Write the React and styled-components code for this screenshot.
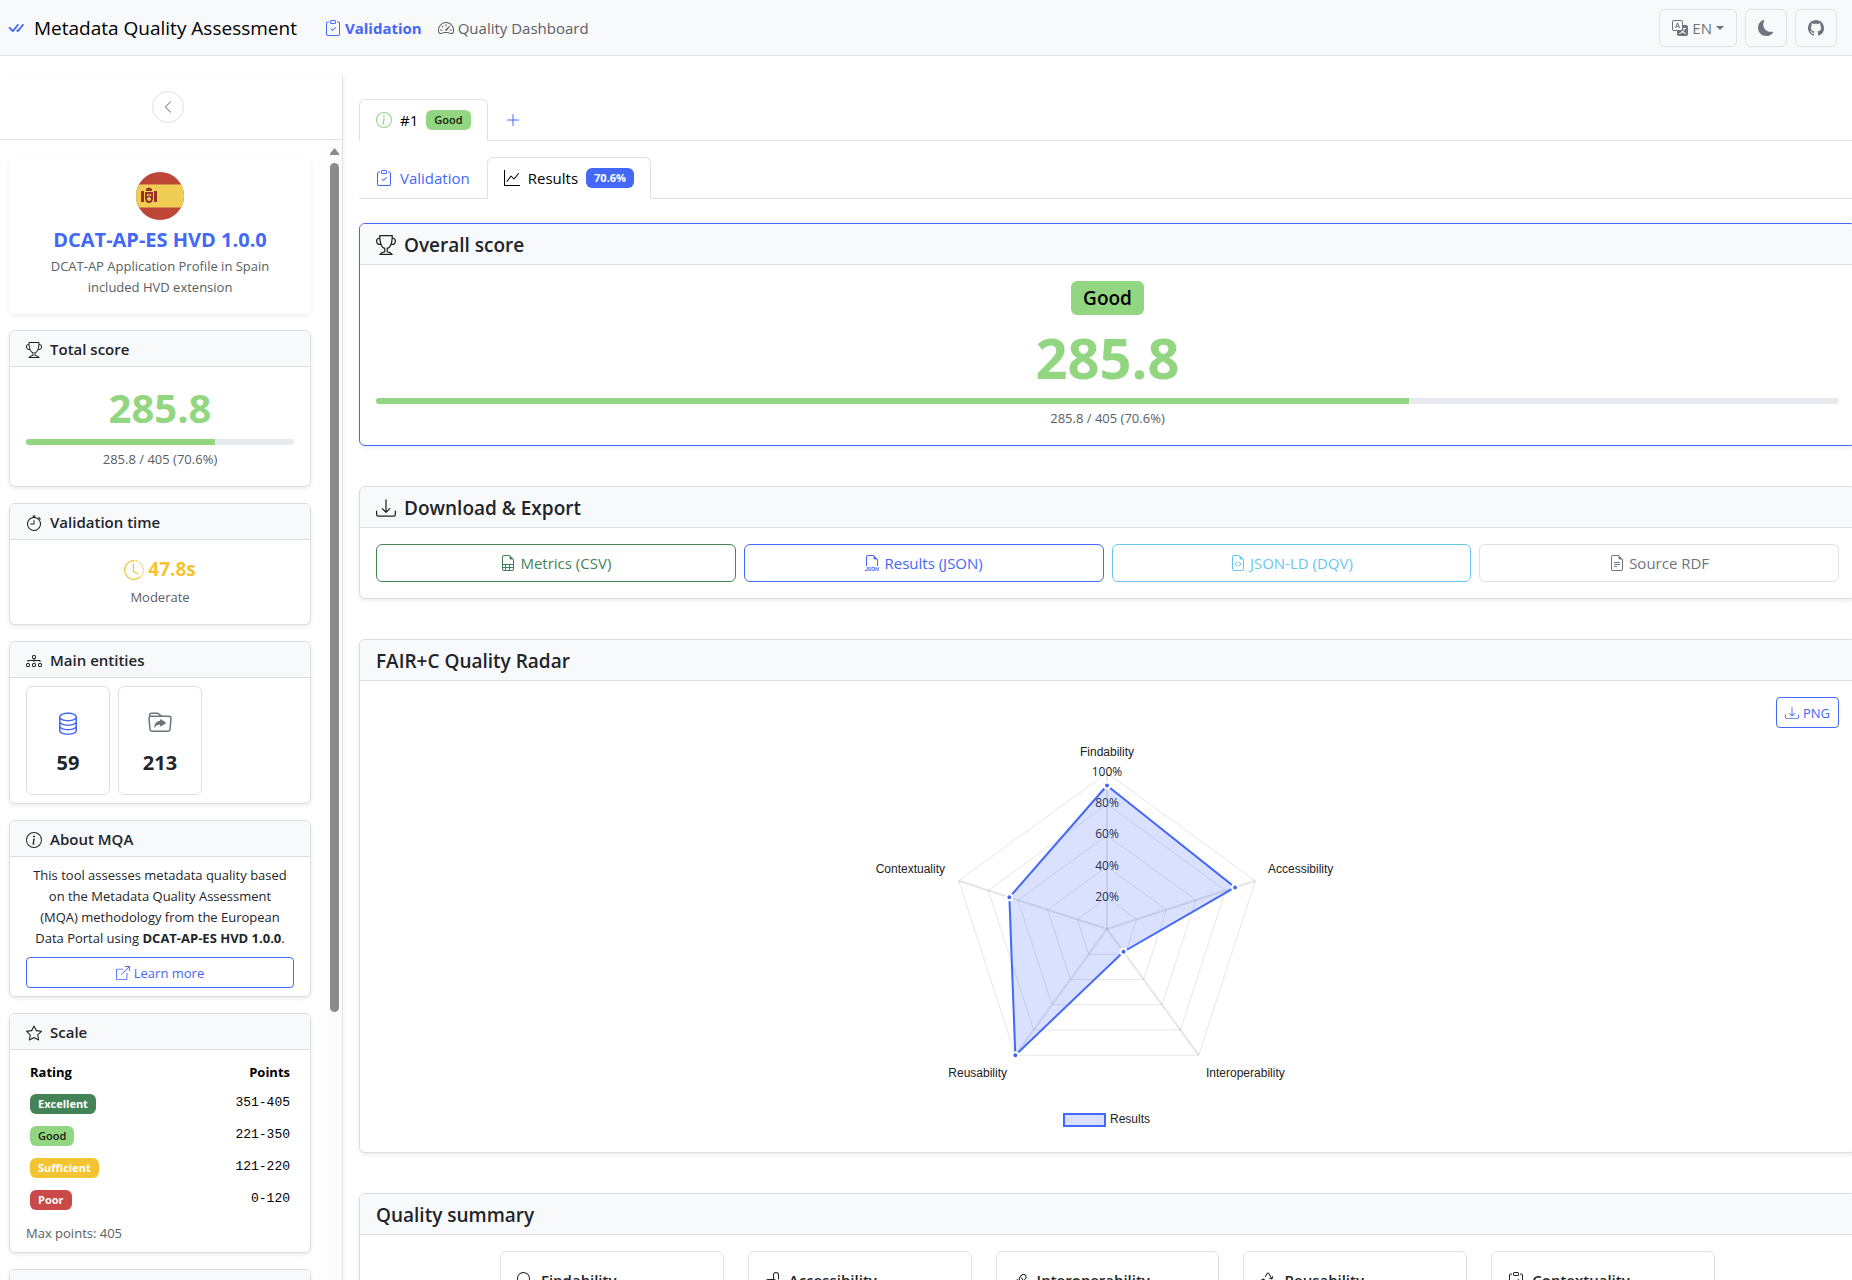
import React from "react";
import styled, { createGlobalStyle, css } from "styled-components";
import {
  BsBoxArrowUpRight, BsCheckAll, BsChevronLeft, BsClipboardCheck, BsClockHistory,
  BsDatabase, BsDiagram3, BsDownload, BsFileEarmarkCode, BsFileEarmarkSpreadsheet,
  BsFileEarmarkText, BsFiletypeJson, BsFolderSymlink, BsGithub, BsGraphUp,
  BsInfoCircle, BsLink45Deg, BsMoonFill, BsPlusLg, BsRecycle, BsSearch,
  BsSpeedometer2, BsStar, BsStopwatch, BsTranslate, BsTrophy, BsUnlock,
} from "react-icons/bs";

const c = {
  primary: "#4368f8",
  text: "#212529",
  muted: "#6c757d",
  border: "#dee2e6",
  cardBorder: "#dcdddf",
  head: "#f8f9fb",
  good: "#93d681",
  excellent: "#438355",
  sufficient: "#f3c431",
  poor: "#c94a49",
  info: "#69c6f0",
};

const GlobalStyle = createGlobalStyle`
  *, *::before, *::after { box-sizing: border-box; }
  body {
    margin: 0;
    background: #fff;
    color: ${c.text};
    font: 400 16px/24px "Open Sans", "Noto Sans", sans-serif;
  }
  h1, h2, h3, h4, p { margin: 0; }
  button { font: inherit; cursor: pointer; }
  a { text-decoration: none; }
  svg { flex: none; }
`;

const Shell = styled.div`
  height: 100vh;
  display: flex;
  flex-direction: column;
  overflow: hidden;
`;

/* Top bar */
const Navbar = styled.header`
  flex: none;
  display: flex;
  align-items: center;
  min-height: 56px;
  padding: 0 15px 0 6px;
  background: ${c.head};
  border-bottom: 1px solid ${c.border};
`;
const Brand = styled.a`
  display: flex;
  align-items: center;
  gap: 8px;
  color: #000;
  font-size: 19px;
  font-weight: 500;
  svg { color: ${c.primary}; width: 20px; height: 20px; }
`;
const NavLinks = styled.nav`
  display: flex;
  gap: 16px;
  margin-left: 28px;
`;
const NavLink = styled.a`
  display: flex;
  align-items: center;
  gap: 4px;
  font-size: 15px;
  color: ${(p) => (p.$active ? c.primary : "#5b5f64")};
  font-weight: ${(p) => (p.$active ? 700 : 400)};
`;
const NavActions = styled.div`
  display: flex;
  gap: 8px;
  margin-left: auto;
`;
const NavButton = styled.button`
  display: flex;
  align-items: center;
  justify-content: center;
  gap: 4px;
  height: 38px;
  padding: 0 12px;
  font-size: 15px;
  color: ${c.muted};
  background: transparent;
  border: 1px solid ${c.border};
  border-radius: 6px;
`;
const Caret = styled.span`
  border: 4px solid transparent;
  border-top-color: currentColor;
  border-bottom: 0;
`;

/* Sidebar */
const Columns = styled.div`
  flex: 1;
  min-height: 0;
  display: flex;
`;
const Sidebar = styled.aside`
  flex: none;
  width: 343px;
  margin-top: 19px;
  display: flex;
  flex-direction: column;
  border-right: 1px solid ${c.border};
  box-shadow: 2px 0 4px rgba(0, 0, 0, 0.03);
`;
const SidebarTop = styled.div`
  flex: none;
  display: flex;
  align-items: center;
  justify-content: center;
  height: 65px;
  padding-right: 6px;
  border-bottom: 1px solid ${c.border};
`;
const CollapseButton = styled.button`
  display: flex;
  align-items: center;
  justify-content: center;
  width: 32px;
  height: 32px;
  padding: 0;
  color: ${c.muted};
  background: #fff;
  border: 1px solid ${c.border};
  border-radius: 50%;
`;
const SidebarScroll = styled.div`
  flex: 1;
  min-height: 0;
  display: flex;
  overflow: hidden;
`;
const CardStack = styled.div`
  flex: 1;
  display: flex;
  flex-direction: column;
  gap: 16px;
  padding: 16px 16px 16px 9px;
`;
const ScrollTrack = styled.div`
  flex: none;
  width: 15px;
  display: flex;
  flex-direction: column;
  align-items: center;
  padding-top: 8px;
  background: #fcfcfc;
`;
const ScrollThumb = styled.div`
  flex: 0 0 75%;
  width: 9px;
  margin-top: 8px;
  background: #8b8b8b;
  border-radius: 5px;
`;

/* Cards */
const Card = styled.section`
  flex: none;
  background: #fff;
  border: 1px solid ${(p) => (p.$accent ? c.primary : c.cardBorder)};
  border-radius: 6px;
  box-shadow: 0 2px 4px rgba(0, 0, 0, 0.075);
`;
const CardHead = styled.div`
  display: flex;
  align-items: center;
  gap: 8px;
  padding: 9px 16px 7px;
  background: ${c.head};
  border-bottom: 1px solid ${c.cardBorder};
  border-radius: 5px 5px 0 0;
  h2 { font-size: 19px; line-height: 24px; font-weight: 600; }
  h3 { font-size: 15px; line-height: 19px; font-weight: 600; }
`;
const CardBody = styled.div`
  display: flex;
  flex-direction: column;
  align-items: ${(p) => (p.$stretch ? "stretch" : "center")};
  padding: ${(p) => (p.$tight ? "8px" : "16px")} 16px;
`;
const ProfileCard = styled.section`
  flex: none;
  display: flex;
  flex-direction: column;
  align-items: center;
  padding: 16px;
  text-align: center;
  border-radius: 6px;
  box-shadow: 0 2px 4px rgba(0, 0, 0, 0.075);
  svg { margin-bottom: 8px; }
  h1 {
    margin-bottom: 4px;
    font-size: 20px;
    line-height: 24px;
    font-weight: 700;
    color: ${c.primary};
  }
`;
const Small = styled.p`
  font-size: 13px;
  line-height: 21px;
  color: #595e63;
  text-align: ${(p) => p.$align || "center"};
`;
const AboutText = styled(Small)`
  padding: 0 4px;
  color: ${c.text};
`;
const Score = styled.div`
  margin-bottom: 6px;
  font-size: ${(p) => (p.$large ? 56 : 40)}px;
  line-height: ${(p) => (p.$large ? 69 : 50)}px;
  font-weight: 700;
  color: ${c.good};
`;
const Progress = styled.div`
  align-self: stretch;
  height: 6px;
  margin-bottom: 4px;
  overflow: hidden;
  background: #e9eaef;
  border-radius: 6px;
`;
const ProgressFill = styled.div`
  height: 100%;
  background: ${c.good};
`;
const TimeValue = styled.div`
  display: flex;
  align-items: center;
  gap: 4px;
  margin-bottom: 4px;
  font-size: 19px;
  line-height: 27px;
  font-weight: 700;
  color: ${c.sufficient};
`;
const EntityGrid = styled.div`
  display: grid;
  grid-template-columns: repeat(3, 1fr);
  gap: 8px;
`;
const Entity = styled.div`
  display: flex;
  flex-direction: column;
  align-items: center;
  gap: 16px;
  padding: 24px 0 19px;
  border: 1px solid ${c.border};
  border-radius: 6px;
  font-size: 20px;
  font-weight: 700;
  svg { color: ${(p) => p.$color}; }
`;
const ScaleTable = styled.table`
  width: 100%;
  margin-bottom: 8px;
  border-collapse: collapse;
  font-size: 13px;
  line-height: 21px;
  color: #000;
  th, td { padding: 4px; text-align: left; }
  th:last-child, td:last-child { text-align: right; }
  tbody tr { height: 32px; }
  td:last-child { padding-bottom: 6px; font-family: "Liberation Mono", monospace; }
`;
const Badge = styled.span`
  display: inline-block;
  vertical-align: middle;
  padding: 4px 8px;
  font-size: 11px;
  line-height: 12px;
  font-weight: ${(p) => (p.$dark ? 600 : 700)};
  color: ${(p) => (p.$dark ? "#152010" : "#fff")};
  background: ${(p) => p.$bg};
  border-radius: 6px;
  ${(p) => p.$large && css`
    margin-bottom: 8px;
    padding: 7px 12px;
    font-size: 19px;
    line-height: 20px;
    color: #000;
  `}
`;

/* Main area */
const Main = styled.main`
  flex: 1;
  min-width: 0;
  margin-right: -4px;
  padding: 43px 0 0 16px;
`;
const Tabs = styled.div`
  display: flex;
  margin-bottom: ${(p) => p.$space}px;
  border-bottom: 1px solid ${c.border};
`;
const Tab = styled.button`
  display: flex;
  align-items: center;
  gap: 8px;
  height: 42px;
  margin-bottom: -1px;
  padding: 0 16px;
  font-size: 15px;
  color: ${(p) => (p.$active ? "#000" : c.primary)};
  background: ${(p) => (p.$active ? "#fff" : "transparent")};
  border: 1px solid ${(p) => (p.$active ? c.border : "transparent")};
  border-bottom-color: ${(p) => (p.$active ? "#fff" : "transparent")};
  border-radius: 6px 6px 0 0;
`;
const Sections = styled.div`
  display: flex;
  flex-direction: column;
  gap: 40px;
`;
const ButtonRow = styled.div`
  display: grid;
  grid-template-columns: repeat(4, 1fr);
  gap: 8px;
`;
const Button = styled.button`
  display: flex;
  align-items: center;
  justify-content: center;
  align-self: ${(p) => p.$self || "auto"};
  gap: 4px;
  height: ${(p) => (p.$small ? 31 : 38)}px;
  margin: ${(p) => (p.$small ? "0 0 8px" : "0")};
  padding: 0 8px;
  font-size: ${(p) => (p.$small ? 13 : 15)}px;
  color: ${(p) => p.$color || c.primary};
  background: #fff;
  border: 1px solid ${(p) => p.$border || p.$color || c.primary};
  border-radius: ${(p) => (p.$small ? 4 : 6)}px;
`;
const LearnMore = styled(Button).attrs({ as: "a", href: "#about" })`
  margin: 8px 0 0;
`;
const SummaryGrid = styled.div`
  display: flex;
  justify-content: center;
  gap: 24px;
`;
const SummaryCard = styled.article`
  flex: 0 0 calc((100% + 24px) / 6 - 24px);
  height: 160px;
  display: flex;
  align-items: flex-start;
  gap: 8px;
  padding: 16px;
  border: 1px solid ${c.border};
  border-radius: 6px;
  svg { margin-top: 4px; }
  h4 { font-size: 15px; line-height: 24px; font-weight: 600; }
`;

const SpainFlag = () => (
  <svg width="48" height="48" viewBox="0 0 48 48" role="img" aria-label="Spain">
    <clipPath id="disc"><circle cx="24" cy="24" r="24" /></clipPath>
    <g clipPath="url(#disc)">
      <rect width="48" height="48" fill="#bd4636" />
      <rect y="12" width="48" height="24" fill="#d98a4c" />
      <rect y="13" width="48" height="22" fill="#f0cd55" />
    </g>
    <g fill="#9b2f22">
      <path d="M5 19h3v11H5zM18 19h3v11h-3z" />
      <path d="M10 17q3-3 6 0v2h-6z" />
      <path d="M9 20h8v6q0 5-4 5t-4-5z" />
    </g>
    <path d="M11 22h1.600v2H11zM13.600 22h1.600v2h-1.600zM11 26h4q0 3-2 3t-2-3z" fill="#f0cd55" />
    <circle cx="13" cy="25.500" r="1" fill="#d9b8b0" />
  </svg>
);

const CX = 299;
const CY = 193;
const R = 156;
const point = (i, k) => {
  const a = (Math.PI * 2 * i) / 5 - Math.PI / 2;
  return [CX + Math.cos(a) * R * k, CY + Math.sin(a) * R * k];
};
const polygon = (ks) => ks.map((k, i) => point(i, k).join(",")).join(" ");
const values = [0.92, 0.863, 0.18, 1, 0.658];

const ChartSvg = styled.svg`
  max-width: 100%;
  font-family: "Liberation Sans", Arial, sans-serif;
  font-size: 12px;
  fill: #222;
`;
const TickLabel = styled.text`
  font-family: "Open Sans", sans-serif;
`;

const Radar = () => (
  <ChartSvg width="600" height="400" viewBox="0 0 600 400" role="img" aria-label="FAIR+C quality radar">
    {[0.2, 0.4, 0.6, 0.8, 1].map((k) => (
      <polygon key={k} points={polygon([k, k, k, k, k])} fill="none" stroke="#000" strokeOpacity="0.1" />
    ))}
    {values.map((_, i) => {
      const [x, y] = point(i, 1);
      return <line key={i} x1={CX} y1={CY} x2={x} y2={y} stroke="#000" strokeOpacity="0.1" strokeWidth="2" />;
    })}
    <g textAnchor="middle">
      <text x={CX} y="20">Findability</text>
      {[100, 80, 60, 40, 20].map((t) => (
        <TickLabel key={t} x={CX} y={Math.round(CY - (R * t) / 100) + 3}>{t}%</TickLabel>
      ))}
    </g>
    <polygon points={polygon(values)} fill={c.primary} fillOpacity="0.2" stroke={c.primary} strokeWidth="2" />
    {values.map((k, i) => {
      const [x, y] = point(i, k);
      return <circle key={i} cx={x} cy={y} r="3" fill={c.primary} stroke="#fff" strokeWidth="2" />;
    })}
    <text x="460" y="137">Accessibility</text>
    <text x="398" y="341">Interoperability</text>
    <text x="199" y="341" textAnchor="end">Reusability</text>
    <text x="137" y="137" textAnchor="end">Contextuality</text>
    <rect x="256" y="378" width="41" height="12" fill={c.primary} fillOpacity="0.2" stroke={c.primary} strokeWidth="2" />
    <text x="302" y="387">Results</text>
  </ChartSvg>
);

const PERCENT = 70.6;
const Bar = () => (
  <Progress role="progressbar" aria-label="Score" aria-valuenow={PERCENT} aria-valuemin={0} aria-valuemax={100}>
    <ProgressFill style={{ width: `${PERCENT}%` }} />
  </Progress>
);

const SideCard = ({ icon: Icon, title, children, ...body }) => (
  <Card>
    <CardHead><Icon size={16} /><h3>{title}</h3></CardHead>
    <CardBody {...body}>{children}</CardBody>
  </Card>
);

const Panel = ({ icon: Icon, title, accent, children, ...body }) => (
  <Card $accent={accent}>
    <CardHead>{Icon && <Icon size={20} />}<h2>{title}</h2></CardHead>
    <CardBody {...body}>{children}</CardBody>
  </Card>
);

const scale = [
  ["Excellent", "351-405", c.excellent],
  ["Good", "221-350", c.good],
  ["Sufficient", "121-220", c.sufficient],
  ["Poor", "0-120", c.poor],
];

const dimensions = [
  ["Findability", BsSearch],
  ["Accessibility", BsUnlock],
  ["Interoperability", BsLink45Deg],
  ["Reusability", BsRecycle],
  ["Contextuality", BsClipboardCheck],
];

export default function App() {
  return (
    <Shell>
      <GlobalStyle />
      <Navbar>
        <Brand href="#"><BsCheckAll />Metadata Quality Assessment</Brand>
        <NavLinks>
          <NavLink href="#validation" $active><BsClipboardCheck size={16} />Validation</NavLink>
          <NavLink href="#dashboard"><BsSpeedometer2 size={16} />Quality Dashboard</NavLink>
        </NavLinks>
        <NavActions>
          <NavButton aria-haspopup="menu"><BsTranslate size={16} />EN<Caret /></NavButton>
          <NavButton aria-label="Dark mode"><BsMoonFill size={16} /></NavButton>
          <NavButton aria-label="GitHub"><BsGithub size={16} /></NavButton>
        </NavActions>
      </Navbar>

      <Columns>
        <Sidebar>
          <SidebarTop>
            <CollapseButton aria-label="Collapse sidebar"><BsChevronLeft size={14} /></CollapseButton>
          </SidebarTop>
          <SidebarScroll>
            <CardStack>
              <ProfileCard>
                <SpainFlag />
                <h1>DCAT-AP-ES HVD 1.0.0</h1>
                <Small>DCAT-AP Application Profile in Spain included HVD extension</Small>
              </ProfileCard>
              <SideCard icon={BsTrophy} title="Total score">
                <Score>285.8</Score>
                <Bar />
                <Small>285.8 / 405 (70.6%)</Small>
              </SideCard>
              <SideCard icon={BsStopwatch} title="Validation time">
                <TimeValue><BsClockHistory size={20} />47.8s</TimeValue>
                <Small>Moderate</Small>
              </SideCard>
              <SideCard icon={BsDiagram3} title="Main entities" $tight $stretch>
                <EntityGrid>
                  <Entity $color={c.primary}><BsDatabase size={24} />59</Entity>
                  <Entity $color={c.muted}><BsFolderSymlink size={24} />213</Entity>
                </EntityGrid>
              </SideCard>
              <SideCard icon={BsInfoCircle} title="About MQA" $tight $stretch>
                <AboutText>
                  This tool assesses metadata quality based on the Metadata Quality Assessment (MQA)
                  methodology from the European Data Portal using <strong>DCAT-AP-ES HVD 1.0.0</strong>.
                </AboutText>
                <LearnMore $small><BsBoxArrowUpRight size={14} />Learn more</LearnMore>
              </SideCard>
              <SideCard icon={BsStar} title="Scale" $tight $stretch>
                <ScaleTable>
                  <thead><tr><th>Rating</th><th>Points</th></tr></thead>
                  <tbody>
                    {scale.map(([name, points, bg]) => (
                      <tr key={name}>
                        <td><Badge $bg={bg} $dark={name === "Good"}>{name}</Badge></td>
                        <td>{points}</td>
                      </tr>
                    ))}
                  </tbody>
                </ScaleTable>
                <Small $align="left">Max points: 405</Small>
              </SideCard>
              <Card><CardHead><h3>&nbsp;</h3></CardHead></Card>
            </CardStack>
            <ScrollTrack aria-hidden="true">
              <svg width="9" height="7" viewBox="0 0 9 7"><path d="M4.500 0 9 5.500V7H0V5.500z" fill="#8b8b8b" /></svg>
              <ScrollThumb />
            </ScrollTrack>
          </SidebarScroll>
        </Sidebar>

        <Main>
          <Tabs role="tablist" $space={16}>
            <Tab role="tab" aria-selected="true" $active>
              <BsInfoCircle size={16} color={c.good} />#1<Badge $bg={c.good} $dark>Good</Badge>
            </Tab>
            <Tab aria-label="Add validation"><BsPlusLg size={16} /></Tab>
          </Tabs>
          <Tabs role="tablist" $space={24}>
            <Tab role="tab" aria-selected="false"><BsClipboardCheck size={16} />Validation</Tab>
            <Tab role="tab" aria-selected="true" $active>
              <BsGraphUp size={16} />Results<Badge $bg={c.primary}>70.6%</Badge>
            </Tab>
          </Tabs>

          <Sections>
            <Panel icon={BsTrophy} title="Overall score" accent>
              <Badge $bg={c.good} $dark $large>Good</Badge>
              <Score $large>285.8</Score>
              <Bar />
              <Small>285.8 / 405 (70.6%)</Small>
            </Panel>
            <Panel icon={BsDownload} title="Download &amp; Export" $stretch>
              <ButtonRow>
                <Button $color={c.excellent}><BsFileEarmarkSpreadsheet size={16} />Metrics (CSV)</Button>
                <Button><BsFiletypeJson size={16} />Results (JSON)</Button>
                <Button $color={c.info}><BsFileEarmarkCode size={16} />JSON-LD (DQV)</Button>
                <Button $color={c.muted} $border={c.border}><BsFileEarmarkText size={16} />Source RDF</Button>
              </ButtonRow>
            </Panel>
            <Panel title="FAIR+C Quality Radar">
              <Button $small $self="flex-end"><BsDownload size={14} />PNG</Button>
              <Radar />
            </Panel>
            <Panel title="Quality summary" $stretch>
              <SummaryGrid>
                {dimensions.map(([name, Icon]) => (
                  <SummaryCard key={name}><Icon size={16} /><h4>{name}</h4></SummaryCard>
                ))}
              </SummaryGrid>
            </Panel>
          </Sections>
        </Main>
      </Columns>
    </Shell>
  );
}
